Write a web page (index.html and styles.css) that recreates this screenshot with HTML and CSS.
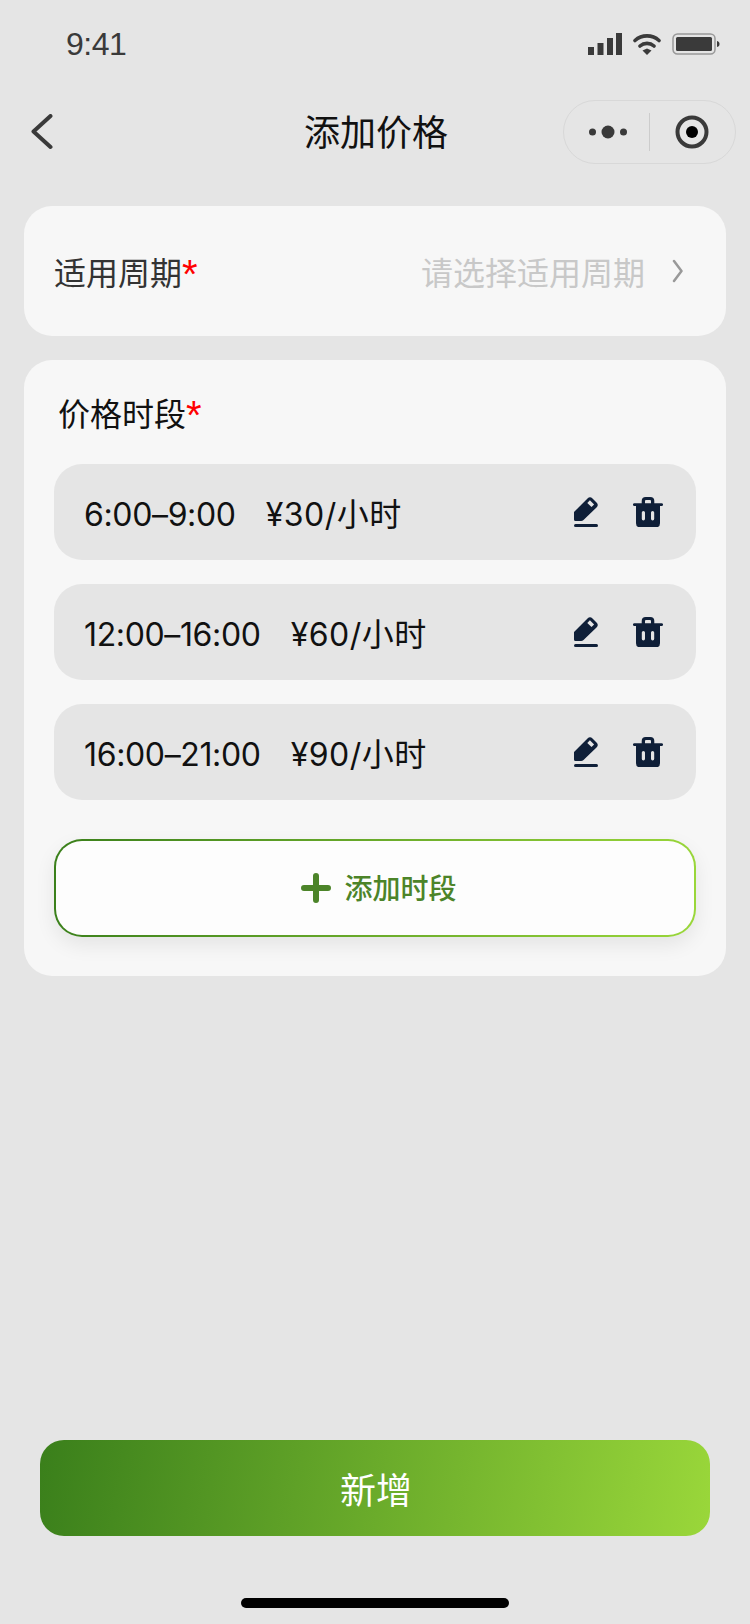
FILE: index.html
```html
<!DOCTYPE html>
<html lang="zh-CN">
<head>
  <meta charset="UTF-8">
  <meta name="viewport" content="width=device-width, initial-scale=1">
  <title>添加价格</title>
  <link rel="stylesheet" href="styles.css">
</head>
<body>
  <!-- Status bar -->
  <div class="status-bar">
    <span class="status-time">9:41</span>
    <div class="status-icons">
      <svg width="34" height="22" viewBox="0 0 34 22"><rect x="0" y="14" width="6" height="8" fill="#3a3a3a"/><rect x="9.500" y="10" width="6" height="12" fill="#3a3a3a"/><rect x="19" y="5" width="6" height="17" fill="#3a3a3a"/><rect x="28" y="0" width="6" height="22" fill="#3a3a3a"/></svg>
      <svg width="28" height="22" viewBox="0 0 28 22"><path d="M2 7.500a18 18 0 0 1 24 0M7 13a10.500 10.500 0 0 1 14 0" fill="none" stroke="#3a3a3a" stroke-width="3.600" stroke-linecap="round"/><path d="M14 22l-4.500-4.500L14 15.500l4.500 2z" fill="#3a3a3a"/></svg>
      <svg width="48" height="22" viewBox="0 0 48 22"><rect x="1" y="1" width="42" height="20" rx="4.500" fill="none" stroke="#999" stroke-width="1.500"/><rect x="4" y="4" width="36" height="14" rx="1.500" fill="#3a3a3a"/><path d="M45 8c2 .5 2.500 1.500 2.500 3s-.5 2.500-2.500 3z" fill="#3a3a3a"/></svg>
    </div>
  </div>

  <!-- Nav bar -->
  <div class="nav-bar">
    <svg class="nav-back" width="22" height="36" viewBox="0 0 22 36"><path d="M19.500 2L2.500 17.500 19.500 33" fill="none" stroke="#3a3a3a" stroke-width="4" stroke-linecap="round" stroke-linejoin="round"/></svg>
    <h1 class="nav-title">添加价格</h1>
    <div class="capsule">
      <svg width="38" height="14" viewBox="0 0 38 14"><circle cx="3.500" cy="7" r="3.500" fill="#3a3a3a"/><circle cx="19" cy="7" r="6.500" fill="#3a3a3a"/><circle cx="34.500" cy="7" r="3.500" fill="#3a3a3a"/></svg>
      <span class="capsule-line"></span>
      <svg width="34" height="34" viewBox="0 0 34 34"><circle cx="17" cy="17" r="14.500" fill="none" stroke="#3a3a3a" stroke-width="4"/><circle cx="17" cy="17" r="6" fill="#000"/></svg>
    </div>
  </div>

  <div class="content">
    <div class="card period-card">
      <span class="period-label">适用周期<em>*</em></span>
      <span class="period-value">请选择适用周期</span>
      <svg class="period-arrow" width="12" height="24" viewBox="0 0 12 24"><path d="M3 2l7.500 10L3 22" fill="none" stroke="#999" stroke-width="2.500" stroke-linecap="round" stroke-linejoin="round"/></svg>
    </div>

    <div class="card slot-card">
      <div class="slot-title">价格时段<em>*</em></div>

      <div class="slot-row">
        <span class="slot-text"><span class="slot-time">6:00–9:00</span><span class="slot-price">¥30/小时</span></span>
        <svg class="icon-edit" width="24" height="30" viewBox="0 0 24 30"><use href="#pen"/></svg>
        <svg width="30" height="30" viewBox="0 0 30 30"><use href="#bin"/></svg>
      </div>
      <div class="slot-row">
        <span class="slot-text"><span class="slot-time">12:00–16:00</span><span class="slot-price">¥60/小时</span></span>
        <svg class="icon-edit" width="24" height="30" viewBox="0 0 24 30"><use href="#pen"/></svg>
        <svg width="30" height="30" viewBox="0 0 30 30"><use href="#bin"/></svg>
      </div>
      <div class="slot-row">
        <span class="slot-text"><span class="slot-time">16:00–21:00</span><span class="slot-price">¥90/小时</span></span>
        <svg class="icon-edit" width="24" height="30" viewBox="0 0 24 30"><use href="#pen"/></svg>
        <svg width="30" height="30" viewBox="0 0 30 30"><use href="#bin"/></svg>
      </div>

      <button class="add-btn">
        <svg width="30" height="30" viewBox="0 0 30 30"><path d="M15 3v24M3 15h24" stroke="#4c8429" stroke-width="6" stroke-linecap="round"/></svg>
        <span class="add-label">添加时段</span>
      </button>
    </div>
  </div>

  <button class="submit-btn">新增</button>
  <div class="home-bar"></div>

  <!-- Shared icons -->
  <svg class="icon-defs" width="0" height="0">
    <defs>
      <g id="pen">
        <path fill-rule="evenodd" d="M0 15L13.500 1.500a3.500 3.500 0 0 1 5 0l4 4a3.500 3.500 0 0 1 0 5L9.500 23q-1 1-2.500 1H1.500A1.500 1.500 0 0 1 0 22.500zM13.300 5.900l2.600-2.600 4.200 4.200-2.600 2.600z" fill="#0f1f38"/>
        <rect x="0" y="27" width="24" height="3" rx="1.500" fill="#0f1f38"/>
      </g>
      <g id="bin">
        <path fill-rule="evenodd" d="M8.700 6.300V4a4 4 0 0 1 4-4h4.600a4 4 0 0 1 4 4v2.300h7.400a1.300 1.300 0 0 1 0 2.700H27v17.300a4 4 0 0 1-4 4H7a4 4 0 0 1-4-4V9H1.300a1.300 1.300 0 0 1 0-2.700zM12 6.300h6V4a1 1 0 0 0-1-1h-4a1 1 0 0 0-1 1zM10.400 14a1.600 1.600 0 0 0-1.600 1.600v6.200a1.600 1.600 0 0 0 3.200 0v-6.200a1.600 1.600 0 0 0-1.600-1.600zM19.600 14a1.600 1.600 0 0 0-1.600 1.600v6.200a1.600 1.600 0 0 0 3.200 0v-6.200a1.600 1.600 0 0 0-1.600-1.600z" fill="#0f1f38"/>
      </g>
    </defs>
  </svg>
</body>
</html>
```

FILE: styles.css
```css
* { margin: 0; padding: 0; box-sizing: border-box; }
html, body { height: 100%; }
body {
  width: 750px;
  height: 1624px;
  background: #e5e5e5;
  font-family: "Inter", "Noto Sans CJK SC", sans-serif;
  color: #111;
  display: flex;
  flex-direction: column;
  overflow: hidden;
}
em {
  font-style: normal;
  font-family: "Liberation Sans", sans-serif;
  font-size: 40px;
  line-height: 0;
  color: #f00;
  vertical-align: -3px;
}
button { font-family: inherit; border: none; }

/* Status bar */
.status-bar {
  height: 88px;
  padding: 24px 30px 0 66px;
  display: flex;
  justify-content: space-between;
  align-items: flex-start;
}
.status-time {
  font-family: "Liberation Sans", sans-serif;
  font-size: 32px;
  line-height: 40px;
  letter-spacing: -0.5px;
  color: #3a3a3a;
}
.status-icons { display: flex; align-items: center; gap: 11px; padding-top: 9px; }

/* Nav bar */
.nav-bar {
  height: 118px;
  padding: 12px 14px 42px 31px;
  display: flex;
  align-items: center;
  position: relative;
}
.nav-title {
  position: absolute;
  left: 2px;
  right: 0;
  top: 18px;
  text-align: center;
  font-family: "Noto Sans CJK SC", sans-serif;
  font-size: 36px;
  line-height: 48px;
  font-weight: 400;
  color: #111;
}
.capsule {
  margin-left: auto;
  width: 173px;
  height: 64px;
  border: 1.5px solid #d8d8d8;
  border-radius: 32px;
  display: flex;
  align-items: center;
  padding-left: 25px;
}
.capsule-line {
  width: 1px;
  height: 38px;
  background: #ccc;
  margin: 0 25px 0 22px;
}

/* Cards */
.content { padding: 0 24px; display: flex; flex-direction: column; gap: 24px; }
.card { background: #f7f7f7; border-radius: 28px; }

.period-card {
  height: 130px;
  padding: 0 43px 0 30px;
  display: flex;
  align-items: center;
  font-size: 32px;
}
.period-label { color: #333; font-family: "Noto Sans CJK SC", sans-serif; }
.period-value {
  margin-left: auto;
  font-family: "Noto Sans CJK SC", sans-serif;
  color: #c8c8c8;
}
.period-arrow { margin-left: 26px; }

.slot-card { height: 616px; padding: 28px 30px 0; }
.slot-title {
  font-family: "Noto Sans CJK SC", sans-serif;
  font-size: 32px;
  line-height: 48px;
  padding-left: 4px;
  margin-bottom: 28px;
}
.slot-row {
  height: 96px;
  margin-bottom: 24px;
  background: #e5e5e5;
  border-radius: 28px;
  padding: 0 33px 0 30px;
  display: flex;
  align-items: center;
  font-size: 32px;
}
.slot-text { flex: 1; display: flex; align-items: baseline; gap: 30px; }
.slot-time { letter-spacing: -0.36px; }
.slot-price { letter-spacing: 0.5px; }
.icon-edit { margin-right: 35px; }

.add-btn {
  width: 100%;
  height: 98px;
  margin-top: 39px;
  padding-left: 8px;
  border: 2px solid transparent;
  border-radius: 28px;
  background:
    linear-gradient(#fdfdfd, #fdfdfd) padding-box,
    linear-gradient(95deg, #3a7f1b, #9ad73a) border-box;
  box-shadow: 0 8px 20px rgba(0,0,0,0.08);
  display: flex;
  align-items: center;
  justify-content: center;
  gap: 13px;
  font-family: "Noto Sans CJK SC", sans-serif;
  font-size: 28px;
  font-weight: 500;
  color: #4c8429;
}
.add-label { margin-top: -2px; }

/* Bottom */
.submit-btn {
  width: 670px;
  height: 96px;
  margin: auto 0 0 40px;
  padding-left: 2px;
  border-radius: 24px;
  background: linear-gradient(100deg, #3a7f1b, #9ad73a);
  color: #fff;
  font-family: "Noto Sans CJK SC", sans-serif;
  font-size: 36px;
}
.home-bar {
  width: 268px;
  height: 10px;
  margin: 62px 0 16px 241px;
  background: #000;
  border-radius: 5px;
}
.icon-defs { position: absolute; }
```
